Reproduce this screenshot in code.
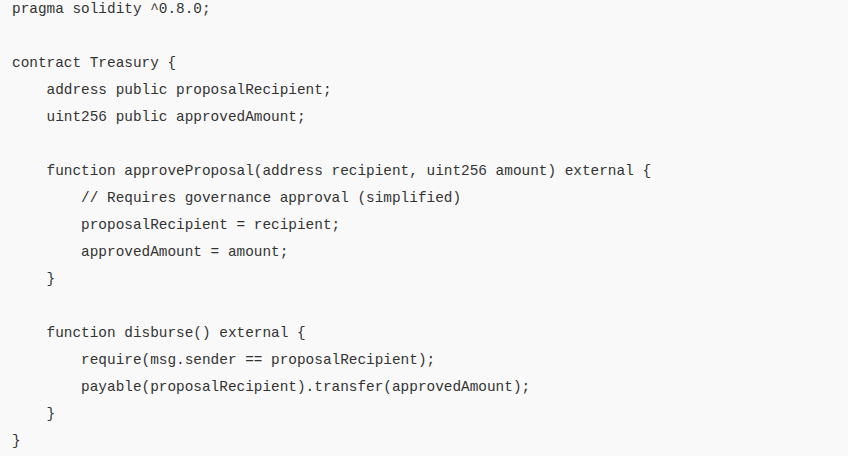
const code = `pragma solidity ^0.8.0;

contract Treasury {
    address public proposalRecipient;
    uint256 public approvedAmount;

    function approveProposal(address recipient, uint256 amount) external {
        // Requires governance approval (simplified)
        proposalRecipient = recipient;
        approvedAmount = amount;
    }

    function disburse() external {
        require(msg.sender == proposalRecipient);
        payable(proposalRecipient).transfer(approvedAmount);
    }
}`

export default function App() {
  return (
    <div className="w-[848px] h-[456px] overflow-hidden bg-[#f9f9f9]">
      <pre className="mt-[-4px] pl-[12px] font-['Liberation_Mono',monospace] text-[14.4px] leading-[27px] text-[#333333]">
        {code}
      </pre>
    </div>
  )
}
